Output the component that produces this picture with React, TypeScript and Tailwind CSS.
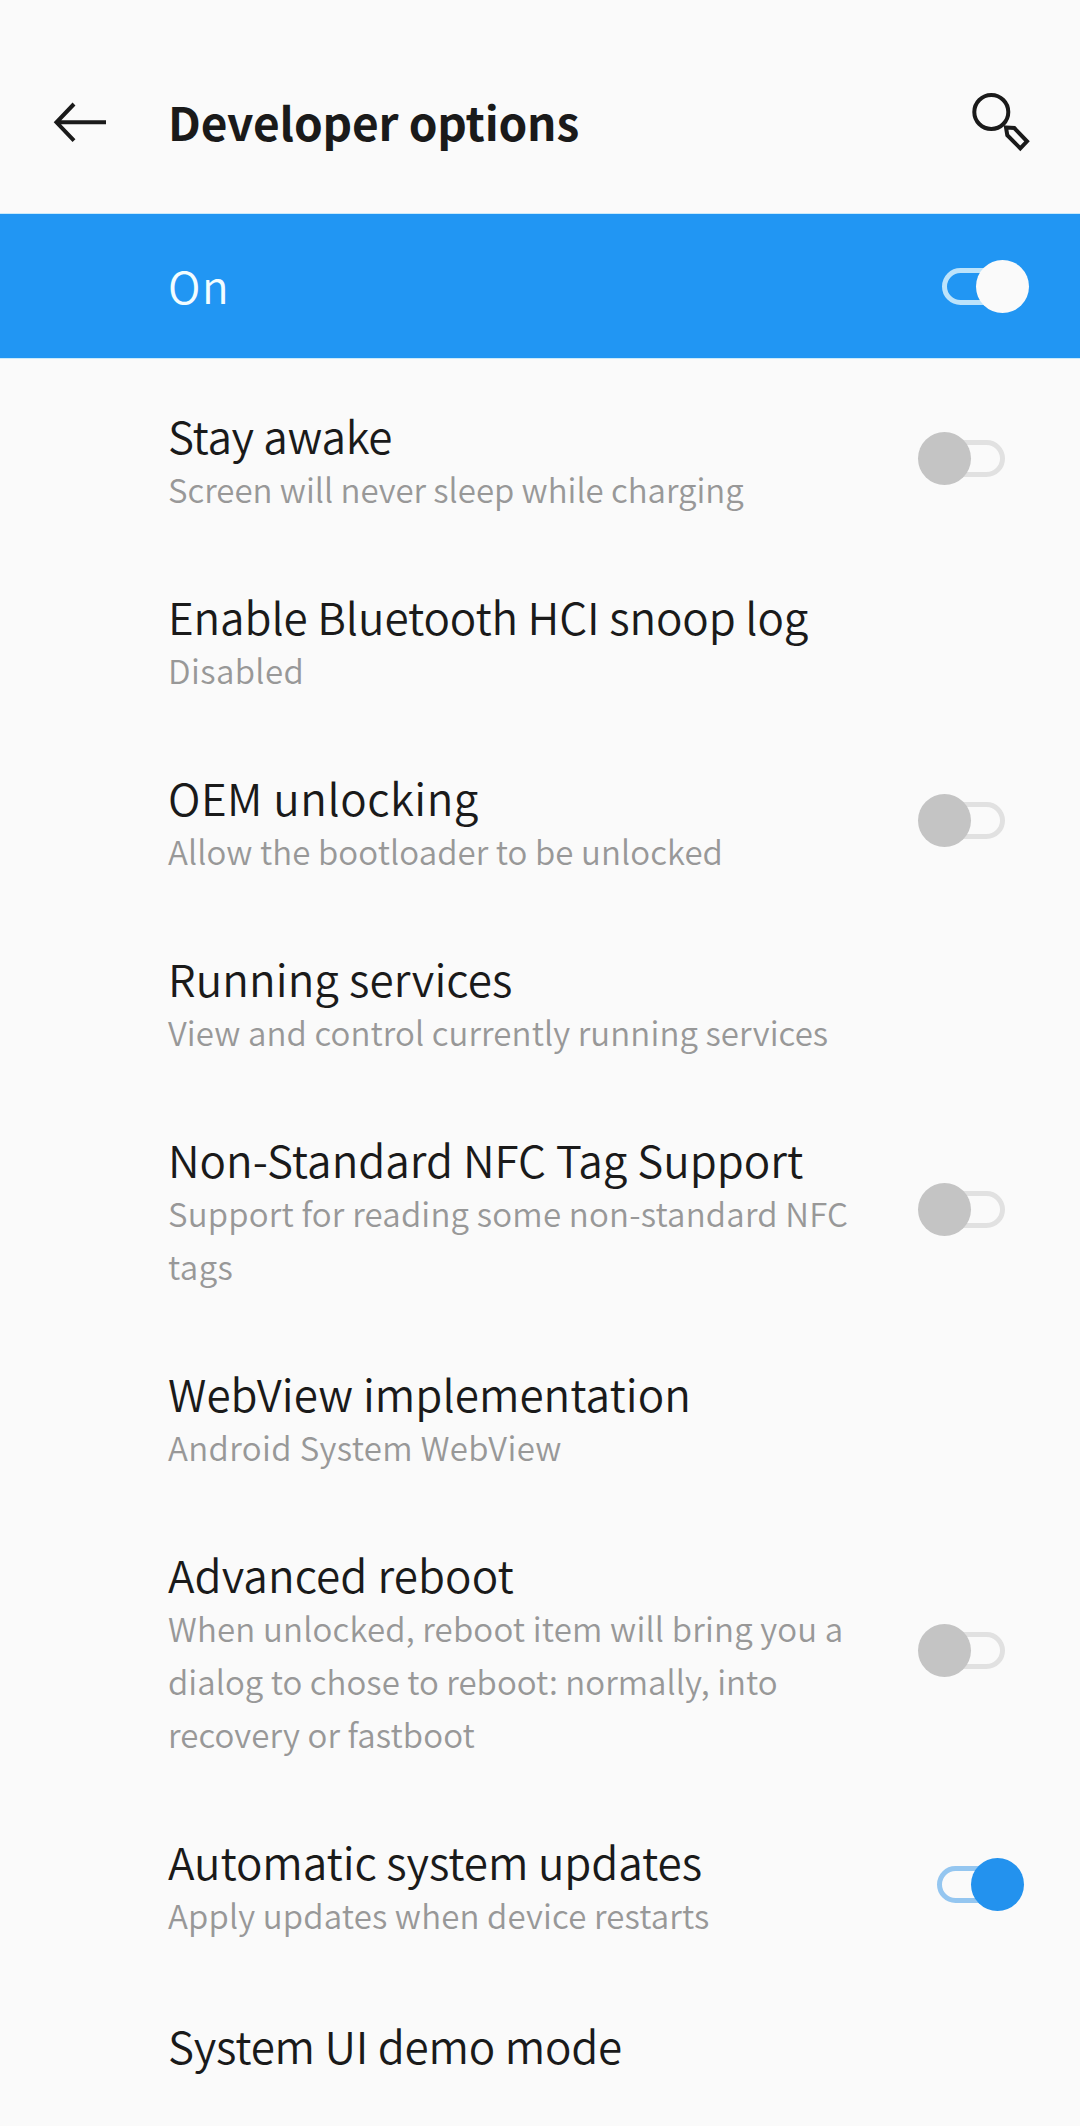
import React from "react";

type Line = { text: string; tracking: string };
type Option = {
  title: Line;
  summary: Line[];
  toggle?: "on" | "off";
};

const OPTIONS: Option[] = [
  {
    title: { text: "Stay awake", tracking: "tracking-[-0.35px]" },
    summary: [{ text: "Screen will never sleep while charging", tracking: "tracking-[-0.02px]" }],
    toggle: "off",
  },
  {
    title: { text: "Enable Bluetooth HCI snoop log", tracking: "tracking-[-0.12px]" },
    summary: [{ text: "Disabled", tracking: "tracking-[0.4px]" }],
  },
  {
    title: { text: "OEM unlocking", tracking: "tracking-[0.5px]" },
    summary: [{ text: "Allow the bootloader to be unlocked", tracking: "tracking-[0.09px]" }],
    toggle: "off",
  },
  {
    title: { text: "Running services", tracking: "tracking-[0.1px]" },
    summary: [{ text: "View and control currently running services", tracking: "tracking-[0.1px]" }],
  },
  {
    title: { text: "Non-Standard NFC Tag Support", tracking: "tracking-[0px]" },
    summary: [
      { text: "Support for reading some non-standard NFC", tracking: "tracking-[0.2px]" },
      { text: "tags", tracking: "tracking-[0.4px]" },
    ],
    toggle: "off",
  },
  {
    title: { text: "WebView implementation", tracking: "tracking-[0.04px]" },
    summary: [{ text: "Android System WebView", tracking: "tracking-[0.37px]" }],
  },
  {
    title: { text: "Advanced reboot", tracking: "tracking-[0.1px]" },
    summary: [
      { text: "When unlocked, reboot item will bring you a", tracking: "tracking-[0.18px]" },
      { text: "dialog to chose to reboot: normally, into", tracking: "tracking-[0.04px]" },
      { text: "recovery or fastboot", tracking: "tracking-[0.1px]" },
    ],
    toggle: "off",
  },
  {
    title: { text: "Automatic system updates", tracking: "tracking-[-0.1px]" },
    summary: [{ text: "Apply updates when device restarts", tracking: "tracking-[0.15px]" }],
    toggle: "on",
  },
];

function Switch({ on, track, knob }: { on: boolean; track: string; knob: string }) {
  return (
    <button
      role="switch"
      aria-checked={on}
      className={`relative flex h-[53px] w-[87px] shrink-0 items-center ${on ? "justify-start" : "justify-end"}`}
    >
      <span className={`h-[37px] w-[66px] rounded-full border-[5px] ${track}`} />
      <span className={`absolute top-0 size-[53px] rounded-full ${on ? "right-0" : "left-0"} ${knob}`} />
    </button>
  );
}

function BackIcon() {
  return (
    <svg className="mt-0.5 h-[62px] w-[56px] shrink-0" viewBox="52 91 56 62" fill="none" stroke="#1a1a1a" strokeWidth="4">
      <path d="M74 104 56.5 122.3 74 140.7M56.5 122.3H106" />
    </svg>
  );
}

function SearchIcon() {
  return (
    <svg className="mt-0.5 h-[62px] w-[62px] shrink-0" viewBox="970 91 62 62" fill="none" stroke="#1a1a1a" strokeWidth="4">
      <circle cx="991.3" cy="112" r="17" />
      <path d="M1006 127.5 1014.3 128 1027 141.3 1020.3 148.3 1007.3 135.2Z" />
    </svg>
  );
}

function OptionRow({ option }: { option: Option }) {
  const on = option.toggle === "on";
  return (
    <li className={`flex items-center justify-between pt-[37px] pb-9 pl-[168px] ${on ? "pr-14" : "pr-[75px]"}`}>
      <div className="whitespace-nowrap">
        <h2 className={`text-[44px] leading-[54px] text-[#1a1a1a] ${option.title.tracking}`}>{option.title.text}</h2>
        <p className="pt-px text-[33px] leading-[53px] text-[#989898]">
          {option.summary.map((line) => (
            <span key={line.text} className={`block ${line.tracking}`}>
              {line.text}
            </span>
          ))}
        </p>
      </div>
      {option.toggle && (
        <div className="mb-[7px]">
          <Switch
            on={on}
            track={on ? "border-[#94c6f0]" : "border-[#e1e1e1]"}
            knob={on ? "bg-[#2392ee]" : "bg-[#c4c4c4]"}
          />
        </div>
      )}
    </li>
  );
}

export default function App() {
  return (
    <div className="h-[2126px] w-[1080px] overflow-hidden bg-[#fafafa] font-['Noto_Sans_CJK_SC',sans-serif] font-[350]">
      <header className="flex h-[213px] items-start pt-[89px] pr-12 pl-[52px]">
        <BackIcon />
        <h1 className="ml-[60px] flex-1 pt-px text-[46px] leading-[62px] font-bold tracking-[-0.17px] text-[#1a1a1a]">
          Developer options
        </h1>
        <SearchIcon />
      </header>
      <div className="flex h-[146px] items-center justify-between border-y border-[#c9eafb] bg-[#2196f3] pr-[51px] pl-[168px]">
        <span className="pb-[3px] text-[44px] leading-[60px] tracking-[1.5px] text-[#f3fdff]">On</span>
        <Switch on track="border-[#bce3fb]" knob="bg-[#fafafa]" />
      </div>
      <ul className="pt-3">
        {OPTIONS.map((option) => (
          <OptionRow key={option.title.text} option={option} />
        ))}
        <li className="pt-10 pl-[168px]">
          <h2 className="text-[44px] leading-[54px] tracking-[-0.22px] text-[#1a1a1a]">System UI demo mode</h2>
        </li>
      </ul>
    </div>
  );
}
